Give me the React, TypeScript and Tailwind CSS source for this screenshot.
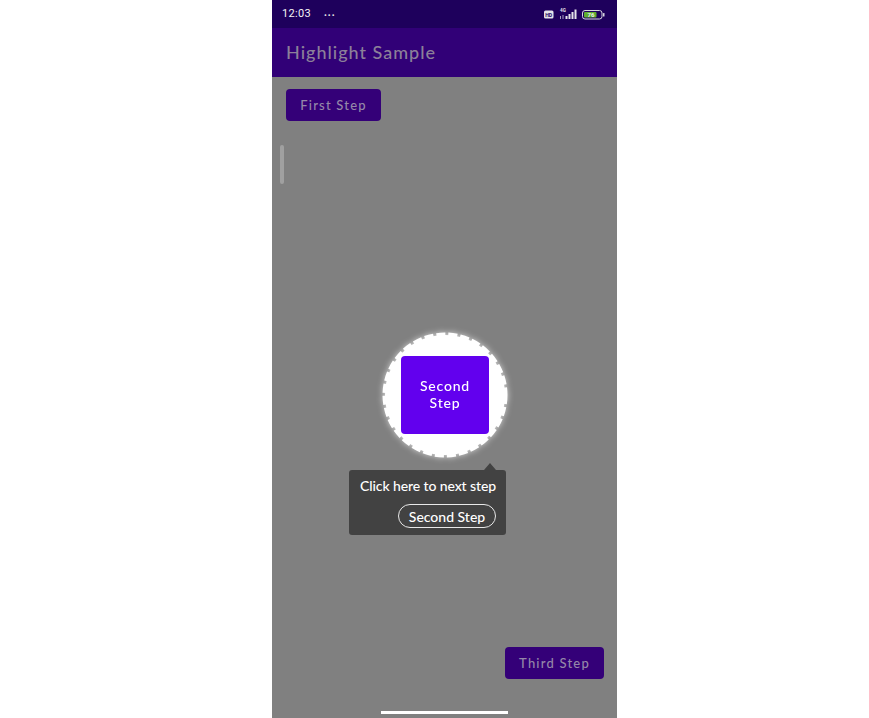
export default function App() {
  return (
    <div className="flex bg-white w-full h-[718px] overflow-hidden pl-[272px] font-['Lato',sans-serif]">
      <div className="relative w-[345px] h-[718px] flex flex-col bg-[#808080]">
        <div className="h-[28px] bg-[#1e005c] flex items-center pl-[10px] pr-[12px] text-white">
          <span className="mt-[1px] text-[11px] tracking-[0.3px] font-['Roboto',sans-serif] text-[#f4f4f4]">12:03</span>
          <span className="ml-[13px] text-[11px] leading-none tracking-[1px] text-[#e8e8e8]">···</span>
          <svg className="ml-auto" width="61" height="12" viewBox="0 0 61 12">
            <rect x="0" y="2.5" width="9.5" height="8" rx="1.5" fill="#e4e4ea" />
            <text x="1.2" y="8.6" fontSize="5.2" fontWeight="700" fill="#1e005c" fontFamily="Roboto, sans-serif">HD</text>
            <text x="16" y="4.4" fontSize="4.6" fontWeight="700" fill="#e4e4ea" fontFamily="Roboto, sans-serif">4G</text>
            <rect x="16" y="8" width="1" height="3" fill="#a8a0c0" />
            <rect x="18.5" y="7" width="1" height="4" fill="#a8a0c0" />
            <rect x="21.5" y="8" width="2" height="3" fill="#e4e4ea" />
            <rect x="24.5" y="6" width="2" height="5" fill="#e4e4ea" />
            <rect x="27.5" y="4" width="2" height="7" fill="#e4e4ea" />
            <rect x="30.5" y="1.5" width="2" height="9.5" fill="#e4e4ea" />
            <rect x="38.5" y="2.5" width="19.5" height="8.5" rx="2.5" fill="none" stroke="#d8d8e0" strokeWidth="1" />
            <rect x="40" y="4" width="12.5" height="5.5" rx="1" fill="#5fae2e" />
            <rect x="59" y="5" width="1.5" height="3.5" rx="0.5" fill="#d8d8e0" />
            <text x="43.5" y="9" fontSize="6" fontWeight="700" fill="#f0f0f0" fontFamily="Roboto, sans-serif">76</text>
          </svg>
        </div>
        <div className="h-[49px] bg-[#310077] flex items-center pl-[14px]">
          <span className="text-[18px] font-medium tracking-[1px] text-[#8c8099]">Highlight Sample</span>
        </div>
        <div className="relative flex-1 flex flex-col items-start pl-[14px] pr-[13px] pt-[12px] pb-[39px]">
          <button className="w-[95px] h-[32px] pt-[1px] rounded-[4px] bg-[#340078] text-[13px] font-medium tracking-[1.2px] text-[#9488a8]">
            First Step
          </button>
          <div className="absolute left-[8px] top-[68px] w-[4px] h-[39px] rounded-full bg-[#a0a0a0]" />
          <div className="flex-1 self-stretch flex items-center justify-center">
            <div className="relative mt-[22px] w-[126px] h-[126px] flex items-center justify-center drop-shadow-[0_0_3px_rgba(255,255,255,0.7)]">
              <svg className="absolute inset-0" width="126" height="126" viewBox="0 0 126 126">
                <circle cx="63" cy="63" r="60" fill="#ffffff" />
                <circle cx="63" cy="63" r="60.5" fill="none" stroke="#ffffff" strokeWidth="4" strokeDasharray="9 3" />
              </svg>
              <button className="relative w-[88px] h-[78px] pb-[2px] rounded-[4px] bg-[#6200ee] text-[14px] font-medium leading-[17px] tracking-[0.8px] text-white">
                Second<br />Step
              </button>
            </div>
          </div>
          <button className="self-end w-[99px] h-[32px] pt-[1px] rounded-[4px] bg-[#340078] text-[13px] font-medium tracking-[1.2px] text-[#9488a8]">
            Third Step
          </button>
          <div className="absolute left-[77px] top-[393px] w-[157px] h-[65px] rounded-[3px] bg-[#424242] px-[11px] pt-[8px] flex flex-col items-end">
            <div className="absolute right-[10px] top-[-7px] w-0 h-0 border-l-[6px] border-r-[6px] border-b-[7px] border-l-transparent border-r-transparent border-b-[#424242]" />
            <span className="self-start text-[14px] font-medium leading-[16px] tracking-[-0.1px] text-white whitespace-nowrap">Click here to next step</span>
            <span className="mt-[10px] mr-[-1px] w-[98px] h-[24px] rounded-full border border-[#e8e8e8] text-[14px] font-medium leading-[24px] text-center text-white">
              Second Step
            </span>
          </div>
        </div>
        <div className="absolute left-[109px] bottom-[4px] w-[127px] h-[3px] bg-white" />
      </div>
    </div>
  );
}
